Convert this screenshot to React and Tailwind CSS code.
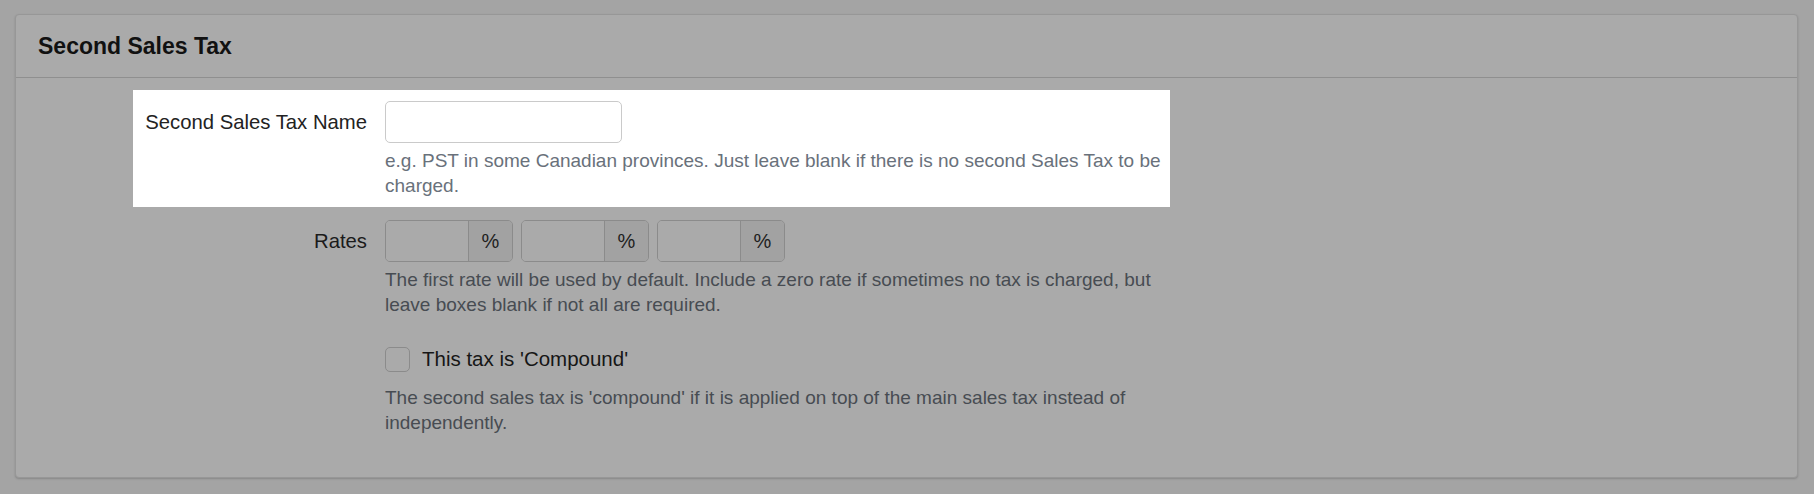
import React from "react";

function RateBox() {
  return (
    <div className="flex h-[42px] w-[128px] overflow-hidden rounded-[5px] border border-[#8b8b8b]">
      <input className="h-full w-[82px] bg-[#aaaaaa] outline-none" />
      <span className="flex flex-1 items-center justify-center border-l border-[#8b8b8b] bg-[#a2a2a2] text-[20px] text-[#1e1e1e]">
        %
      </span>
    </div>
  );
}

export default function App() {
  return (
    <div className="min-h-[494px] bg-[#a4a4a4] pl-[15px] pr-[16px] pt-[14px] font-['Liberation_Sans',Arial,sans-serif]">
      <div className="h-[464px] rounded-[4px] border border-[#979797] bg-[#aaaaaa] shadow-[0_1px_2px_rgba(0,0,0,0.18)]">
        {/* Heading */}
        <div className="flex h-[63px] items-center border-b border-[#8f8f8f] px-[22px]">
          <h2 className="text-[23px] font-bold text-[#111111]">Second Sales Tax</h2>
        </div>

        <div className="pt-[12px]">
          {/* Highlighted field */}
          <div className="ml-[117px] flex w-[1037px] bg-white pb-[9px] pt-[11px]">
            <label className="flex h-[42px] w-[234px] shrink-0 items-center justify-end text-[20.3px] text-[#222222]">
              Second Sales Tax Name
            </label>
            <div className="flex-1 pl-[18px]">
              <input className="h-[42px] w-[237px] rounded-[5px] border border-[#cacaca] outline-none" />
              <p className="mt-[5px] text-[19px] leading-[25px] text-[#69717b]">
                e.g. PST in some Canadian provinces. Just leave blank if there is no second Sales Tax to be charged.
              </p>
            </div>
          </div>

          {/* Rates */}
          <div className="ml-[117px] mt-[13px] flex w-[1037px]">
            <label className="flex h-[42px] w-[234px] shrink-0 items-center justify-end text-[20.3px] text-[#1b1b1b]">
              Rates
            </label>
            <div className="flex-1 pl-[18px]">
              <div className="flex gap-[8px]">
                <RateBox />
                <RateBox />
                <RateBox />
              </div>
              <p className="mt-[5px] text-[19px] leading-[25px] text-[#474c52]">
                The first rate will be used by default. Include a zero rate if sometimes no tax is charged, but leave boxes blank if not all are required.
              </p>

              <div className="mt-[28px] flex h-[28px] items-center gap-[12px]">
                <input
                  type="checkbox"
                  className="h-[25px] w-[25px] appearance-none rounded-[5px] border border-[#8b8b8b] bg-[#aaaaaa]"
                />
                <span className="text-[20.5px] text-[#161616]">This tax is 'Compound'</span>
              </div>
              <p className="mt-[12px] text-[19px] leading-[25px] text-[#474c52]">
                The second sales tax is 'compound' if it is applied on top of the main sales tax instead of independently.
              </p>
            </div>
          </div>
        </div>
      </div>
    </div>
  );
}
